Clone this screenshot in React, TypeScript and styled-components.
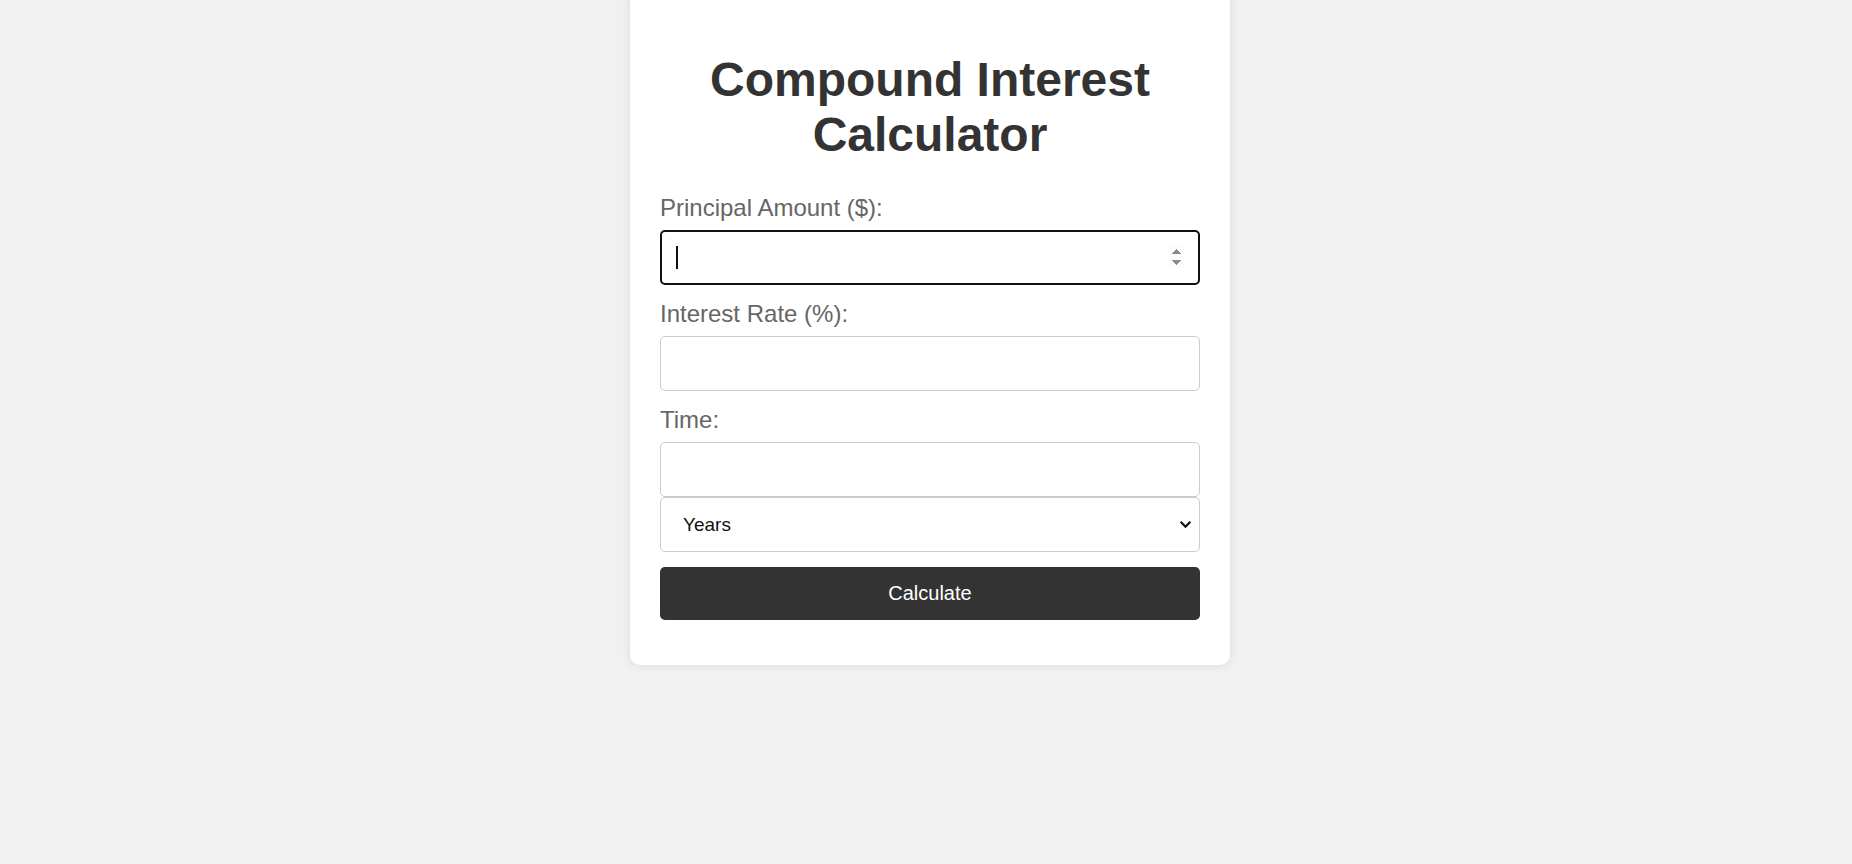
import React from 'react';
import styled, { createGlobalStyle } from 'styled-components';

const GlobalStyle = createGlobalStyle`
    html, body {
        margin: 0;
        padding: 0;
        background: #f1f1f1;
        font-family: "Liberation Sans", Arial, sans-serif;
        font-size: 20px;
    }
`

export default function App() {
    return (
        <Page>
            <GlobalStyle />
            <Card>
                <Title>Compound Interest Calculator</Title>
                <FormGroup>
                    <Label htmlFor="principal">Principal Amount ($):</Label>
                    <Field>
                        <Input id="principal" type="number" autoFocus />
                        <Caret />
                    </Field>
                </FormGroup>
                <FormGroup>
                    <Label htmlFor="rate">Interest Rate (%):</Label>
                    <Input id="rate" type="number" />
                </FormGroup>
                <FormGroup>
                    <Label htmlFor="time">Time:</Label>
                    <Input id="time" type="number" />
                    <Field>
                        <Select id="unit" defaultValue="years">
                            <option value="years">Years</option>
                            <option value="months">Months</option>
                        </Select>
                        <Chevron viewBox="0 0 12 8" aria-hidden="true">
                            <path d="M1.5 1.5 L6 6 L10.5 1.5" fill="none" stroke="#111" strokeWidth="2" />
                        </Chevron>
                    </Field>
                </FormGroup>
                <Button type="button">Calculate</Button>
            </Card>
        </Page>
    );
}

export const Page = styled.div`
    display: flex;
    justify-content: center;
    align-items: flex-start;
    min-height: 100vh;
    padding-left: 8px;
    box-sizing: border-box;
`
export const Card = styled.div`
    width: 600px;
    margin-top: -10px;
    padding: 30px;
    box-sizing: border-box;
    background: #fff;
    border-radius: 10px;
    box-shadow: 0 0 10px rgba(0, 0, 0, 0.1);
`
export const Title = styled.h1`
    margin: 32px 0;
    font-size: 48px;
    font-weight: 700;
    line-height: 55px;
    text-align: center;
    color: #333;
`
export const FormGroup = styled.div`
    display: flex;
    flex-direction: column;
    margin-bottom: 15px;
`
export const Label = styled.label`
    margin-bottom: 8px;
    font-size: 24px;
    line-height: 28px;
    color: #666;
`
export const Field = styled.div`
    position: relative;
    display: flex;
`
export const Input = styled.input`
    width: 100%;
    height: 55px;
    padding: 15px;
    box-sizing: border-box;
    font-family: "Liberation Sans", Arial, sans-serif;
    font-size: 20px;
    color: #111;
    border: 1px solid #ccc;
    border-radius: 5px;
    background: #fff;

    &:focus {
        outline: none;
        border: 2px solid #111;
        padding: 14px;
    }
`
export const Caret = styled.span`
    position: absolute;
    left: 16px;
    top: 16px;
    width: 2px;
    height: 23px;
    background: #111;
    pointer-events: none;
`
export const Select = styled.select`
    width: 100%;
    height: 55px;
    padding: 0 40px 0 22px;
    box-sizing: border-box;
    appearance: none;
    font-family: "Liberation Sans", Arial, sans-serif;
    font-size: 19px;
    color: #111;
    border: 1px solid #ccc;
    border-radius: 5px;
    background: #fff;
`
export const Chevron = styled.svg`
    position: absolute;
    right: 8px;
    top: 23px;
    width: 13px;
    height: 9px;
    pointer-events: none;
`
export const Button = styled.button`
    width: 100%;
    height: 53px;
    margin-bottom: 15px;
    font-family: "Liberation Sans", Arial, sans-serif;
    font-size: 20px;
    color: #fff;
    background: #333;
    border: none;
    border-radius: 5px;
    cursor: pointer;
`
